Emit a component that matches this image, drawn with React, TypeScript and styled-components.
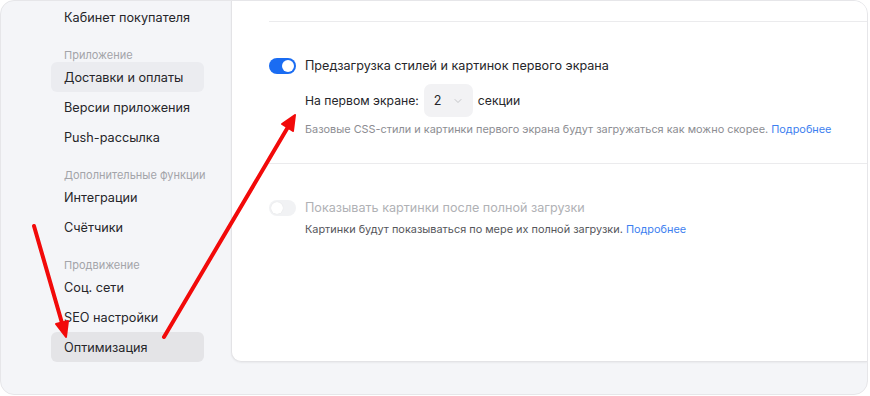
import React from 'react';
import styled, { createGlobalStyle } from 'styled-components';
import { ChevronDown } from 'lucide-react';

const GlobalStyle = createGlobalStyle`
  html, body {
    margin: 0;
    padding: 0;
    background: #ffffff;
  }
  body {
    font-family: Inter, "Noto Sans", "Liberation Sans", sans-serif;
    color: #2b2b2e;
  }
`;

const Frame = styled.div`
  position: relative;
  box-sizing: border-box;
  width: 868px;
  height: 395px;
  border: 1.5px solid #e6e6e9;
  border-radius: 14px;
  background: #f4f5f8;
  overflow: hidden;
  display: grid;
  grid-template-columns: 230px 1fr;
`;

const Sidebar = styled.nav`
  display: flex;
  flex-direction: column;
  padding: 1px 0 0 50px;
`;

const NavItem = styled.div<{ $tone?: 'soft' | 'strong' }>`
  box-sizing: border-box;
  width: 153px;
  height: 30px;
  display: flex;
  align-items: center;
  padding-left: 13px;
  border-radius: 6px;
  font-size: 12.7px;
  color: #26262a;
  background: ${(p) =>
    p.$tone === 'strong' ? '#e4e4e7' : p.$tone === 'soft' ? '#ebecf0' : 'transparent'};
`;

const NavGroup = styled.div`
  margin-top: 16px;
  height: 14px;
  padding-left: 13px;
  display: flex;
  align-items: center;
  font-size: 11px;
  color: #a3a4a9;
`;

const Card = styled.section`
  box-sizing: border-box;
  height: 362px;
  margin-top: -1px;
  background: #ffffff;
  border: 1px solid #e3e3e6;
  border-top: none;
  border-right: none;
  border-radius: 0 0 0 10px;
  box-shadow: 0 1px 2px rgba(0, 0, 0, 0.05);
  padding-left: 37px;
`;

const Divider = styled.div<{ $top: number }>`
  height: 1px;
  background: #ebebed;
  margin-top: ${(p) => p.$top}px;
`;

const Setting = styled.div<{ $bottom: number }>`
  padding: 35px 0 ${(p) => p.$bottom}px;
`;

const ToggleRow = styled.div`
  display: flex;
  align-items: center;
  gap: 9px;
  height: 17px;
`;

const Toggle = styled.span<{ $on?: boolean }>`
  position: relative;
  box-sizing: border-box;
  width: 27px;
  height: 16px;
  border-radius: 8px;
  background: ${(p) => (p.$on ? '#1a6cf2' : '#f1f2f4')};
  flex-shrink: 0;

  &::after {
    content: '';
    position: absolute;
    top: 2px;
    left: ${(p) => (p.$on ? '13px' : '2px')};
    width: 12px;
    height: 12px;
    border-radius: 50%;
    background: #ffffff;
    box-shadow: ${(p) => (p.$on ? 'none' : '0 0 1px rgba(0,0,0,0.12)')};
  }
`;

const Label = styled.span<{ $muted?: boolean }>`
  font-size: 12.6px;
  color: ${(p) => (p.$muted ? '#b0b1b5' : '#26262a')};
`;

const Indented = styled.div`
  padding-left: 36px;
`;

const SelectRow = styled.div`
  display: flex;
  align-items: center;
  gap: 5px;
  margin-top: 10px;
  font-size: 12.2px;
  color: #26262a;
`;

const Select = styled.div`
  box-sizing: border-box;
  width: 49px;
  height: 33px;
  border-radius: 7px;
  background: #f2f2f4;
  display: flex;
  align-items: center;
  justify-content: space-between;
  padding: 0 9px 0 10px;
  font-size: 12.6px;
  color: #26262a;
`;

const Hint = styled.p<{ $top: number; $color?: string }>`
  margin: ${(p) => p.$top}px 0 0;
  font-size: 10.9px;
  line-height: 16px;
  color: ${(p) => p.$color ?? '#8c8d92'};
`;

const More = styled.a`
  color: #3d7ff0;
  text-decoration: none;
`;

const Arrows = styled.svg`
  position: absolute;
  left: 0;
  top: 0;
  pointer-events: none;
`;

const navTop = ['Кабинет покупателя'];
const groups: { title: string; items: string[] }[] = [
  { title: 'Приложение', items: ['Доставки и оплаты', 'Версии приложения', 'Push-рассылка'] },
  { title: 'Дополнительные функции', items: ['Интеграции', 'Счётчики'] },
  { title: 'Продвижение', items: ['Соц. сети', 'SEO настройки', 'Оптимизация'] },
];

const toneOf = (name: string) =>
  name === 'Оптимизация' ? 'strong' : name === 'Доставки и оплаты' ? 'soft' : undefined;

const App = () => (
  <>
    <GlobalStyle />
    <Frame>
      <Sidebar>
        {navTop.map((n) => (
          <NavItem key={n}>{n}</NavItem>
        ))}
        {groups.map((g) => (
          <React.Fragment key={g.title}>
            <NavGroup>{g.title}</NavGroup>
            {g.items.map((n) => (
              <NavItem key={n} $tone={toneOf(n)}>
                {n}
              </NavItem>
            ))}
          </React.Fragment>
        ))}
      </Sidebar>

      <Card>
        <Divider $top={21} />
        <Setting $bottom={26}>
          <ToggleRow>
            <Toggle $on />
            <Label>Предзагрузка стилей и картинок первого экрана</Label>
          </ToggleRow>
          <Indented>
            <SelectRow>
              <span>На первом экране:</span>
              <Select>
                2
                <ChevronDown size={12} color="#b4b5ba" strokeWidth={1.5} />
              </Select>
              <span>секции</span>
            </SelectRow>
            <Hint $top={4}>
              Базовые CSS-стили и картинки первого экрана будут загружаться как можно скорее.{' '}
              <More href="#">Подробнее</More>
            </Hint>
          </Indented>
        </Setting>
        <Divider $top={0} />
        <Setting $bottom={0}>
          <ToggleRow>
            <Toggle />
            <Label $muted>Показывать картинки после полной загрузки</Label>
          </ToggleRow>
          <Indented>
            <Hint $top={5} $color="#55565b">
              Картинки будут показываться по мере их полной загрузки.{' '}
              <More href="#">Подробнее</More>
            </Hint>
          </Indented>
        </Setting>
      </Card>

      <Arrows width="868" height="395" viewBox="0 0 868 395">
        <g stroke="#f20a0a" strokeWidth="4" strokeLinecap="round" fill="#f20a0a">
          <line x1="33" y1="225" x2="61" y2="322" />
          <polygon points="65,336 55,323 67,320" strokeLinejoin="round" strokeWidth="2" />
          <line x1="163" y1="336" x2="287" y2="126" />
          <polygon points="294,114 281,123 292,130" strokeLinejoin="round" strokeWidth="2" />
        </g>
      </Arrows>
    </Frame>
  </>
);

export default App;
